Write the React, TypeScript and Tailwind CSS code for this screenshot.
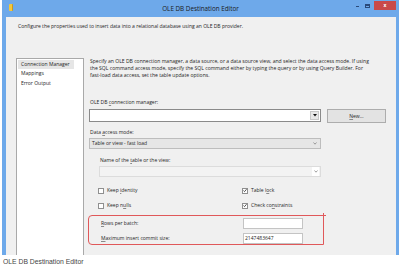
import React from "react";

const U = ({ children }: { children: React.ReactNode }) => (
  <span className="underline underline-offset-[1px] decoration-[0.5px] decoration-[#8a8a8a]">{children}</span>
);

const Check = ({ checked, label }: { checked?: boolean; label: React.ReactNode }) => (
  <div className="flex items-center h-[7px]">
    <div className="w-[6px] h-[6px] border border-[#8f8f8f] bg-white flex items-center justify-center">
      {checked && (
        <svg width="5" height="5" viewBox="0 0 5 5">
          <path d="M0.6 2.6 L1.9 3.9 L4.4 0.9" fill="none" stroke="#222" strokeWidth="1" />
        </svg>
      )}
    </div>
    <span className="ml-[3px]">{label}</span>
  </div>
);

const Chevron = () => (
  <svg width="4" height="3" viewBox="0 0 4 3">
    <path d="M0.5 0.5 L2 2.2 L3.5 0.5" fill="none" stroke="#777" strokeWidth="0.7" />
  </svg>
);

export default function App() {
  return (
    <div className="w-[400px] h-[268px] bg-white overflow-hidden font-['Open_Sans',sans-serif] text-[5px] leading-[7px] text-[#1e1e1e]">
      {/* window */}
      <div className="ml-[2px] w-[397px] h-[255px] flex flex-col bg-[#6ea9ea]">
        <div className="h-[17px] grid grid-cols-[1fr_auto_1fr] items-start">
          <div className="pl-[7px] pt-[4px]">
            <div className="w-[4px] h-[7px] bg-[#f3c73c] rounded-[1px] border-r border-[#c99a1b]"></div>
          </div>
          <div className="pt-[5px] text-[6.3px] leading-[8px] text-[#1a1a1a]">OLE DB Destination Editor</div>
          <div className="flex justify-end items-start pr-[3px] pt-[1px]">
            <div className="w-[6px] h-[9px] flex items-end pb-[3px] justify-center">
              <div className="w-[3px] h-[1px] bg-[#2a4a7a]"></div>
            </div>
            <div className="w-[14px] h-[9px] flex items-center justify-center">
              <div className="w-[5px] h-[4px] border border-[#2a4a7a] border-t-2"></div>
            </div>
            <div className="w-[22px] h-[9px] bg-[#c94a4a] flex items-center justify-center text-white text-[5px] leading-[9px] font-bold">
              x
            </div>
          </div>
        </div>

        <div className="ml-[4px] mr-[3px] flex-1 bg-[#f0f0f0] flex flex-col">
          <div className="pl-[12px] pt-[6px] whitespace-nowrap">
            Configure the properties used to insert data into a relational database using an OLE DB provider.
          </div>

          <div className="mt-[28px] flex flex-1">
            {/* nav */}
            <div className="ml-[10px] w-[68px] bg-white border border-[#a9a9a9] border-b-0 pt-[1px] px-[1px]">
              <div className="bg-[#e6e6e6] pl-[3px] h-[9px] leading-[9px] w-[56px]">Connection Manager</div>
              <div className="pl-[3px] h-[9.5px] leading-[9.5px]">Mappings</div>
              <div className="pl-[3px] h-[9.5px] leading-[9.5px]">Error Output</div>
            </div>

            {/* right */}
            <div className="ml-[6px] flex flex-col">
              <div className="whitespace-nowrap text-[5.07px]">
                Specify an OLE DB connection manager, a data source, or a data source view, and select the data access mode. If using
                <br />
                the SQL command access mode, specify the SQL command either by typing the query or by using Query Builder. For
                <br />
                fast-load data access, set the table update options.
              </div>

              <div className="mt-[20px]">
                OLE DB <U>c</U>onnection manager:
              </div>
              <div className="mt-[3px] flex items-start -ml-[1px]">
                <div className="w-[232px] h-[13px] bg-white border border-[#8a8a8a] flex justify-end items-stretch p-[1px]">
                  <div className="w-[9px] bg-[#e8e8e8] border border-[#c8c8c8] flex items-center justify-center">
                    <svg width="4" height="3" viewBox="0 0 4 3">
                      <path d="M0 0 L4 0 L2 2.5 Z" fill="#111" />
                    </svg>
                  </div>
                </div>
                <div className="ml-[6px] w-[59px] h-[14px] bg-[#e3e3e3] border border-[#adadad] flex items-center justify-center">
                  <span>
                    <U>N</U>ew...
                  </span>
                </div>
              </div>

              <div className="mt-[6px]">
                Data <U>a</U>ccess mode:
              </div>
              <div className="mt-[2px] -ml-[1px] w-[232px] h-[11px] bg-[#e6e6e6] border border-[#bdbdbd] flex items-center justify-between pl-[2px] pr-[3px]">
                <span>Table or view - fast load</span>
                <Chevron />
              </div>

              <div className="mt-[8px] pl-[10px]">
                Name of the <U>t</U>able or the view:
              </div>
              <div className="mt-[2px] ml-[9px] w-[222px] h-[11px] bg-[#f3f3f3] border border-[#dcdcdc] flex items-center justify-end pr-[1px]">
                <div className="w-[7px] h-[9px] bg-white flex items-center justify-center">
                  <Chevron />
                </div>
              </div>

              <div className="mt-[10px] ml-[8px] grid grid-cols-[144px_auto] gap-y-[8px]">
                <Check label={<>Keep <U>i</U>dentity</>} />
                <Check checked label={<>Table l<U>o</U>ck</>} />
                <Check label={<>Keep n<U>u</U>lls</>} />
                <Check checked label={<>Check co<U>n</U>straints</>} />
              </div>

              <div className="relative mt-[6px] -ml-[2px] w-[236px] h-[30px] border border-[#e0585a] rounded-l-[4px] pl-[12px] pt-[2px] flex flex-col gap-[4px]">
                <div className="absolute -top-[3px] -right-[1px] w-[1px] h-[3px] bg-[#e0585a]"></div>
                <div className="absolute -top-[1px] -right-[3px] w-[3px] h-[1px] bg-[#e0585a]"></div>
                <div className="flex items-center h-[11px]">
                  <span className="w-[142px]">
                    <U>R</U>ows per batch:
                  </span>
                  <div className="w-[60px] h-[11px] bg-white border border-[#c4c4c4]"></div>
                </div>
                <div className="flex items-center h-[11px]">
                  <span className="w-[142px]">
                    <U>M</U>aximum insert commit size:
                  </span>
                  <div className="w-[60px] h-[11px] bg-white border border-[#c4c4c4] pl-[1px] leading-[9px]">2147483647</div>
                </div>
              </div>
            </div>
          </div>
        </div>
      </div>
      <div className="pl-[3px] h-[13px] leading-[13px] text-[6.8px] text-[#444] font-['Liberation_Sans',sans-serif]">
        OLE DB Destination Editor
      </div>
    </div>
  );
}
